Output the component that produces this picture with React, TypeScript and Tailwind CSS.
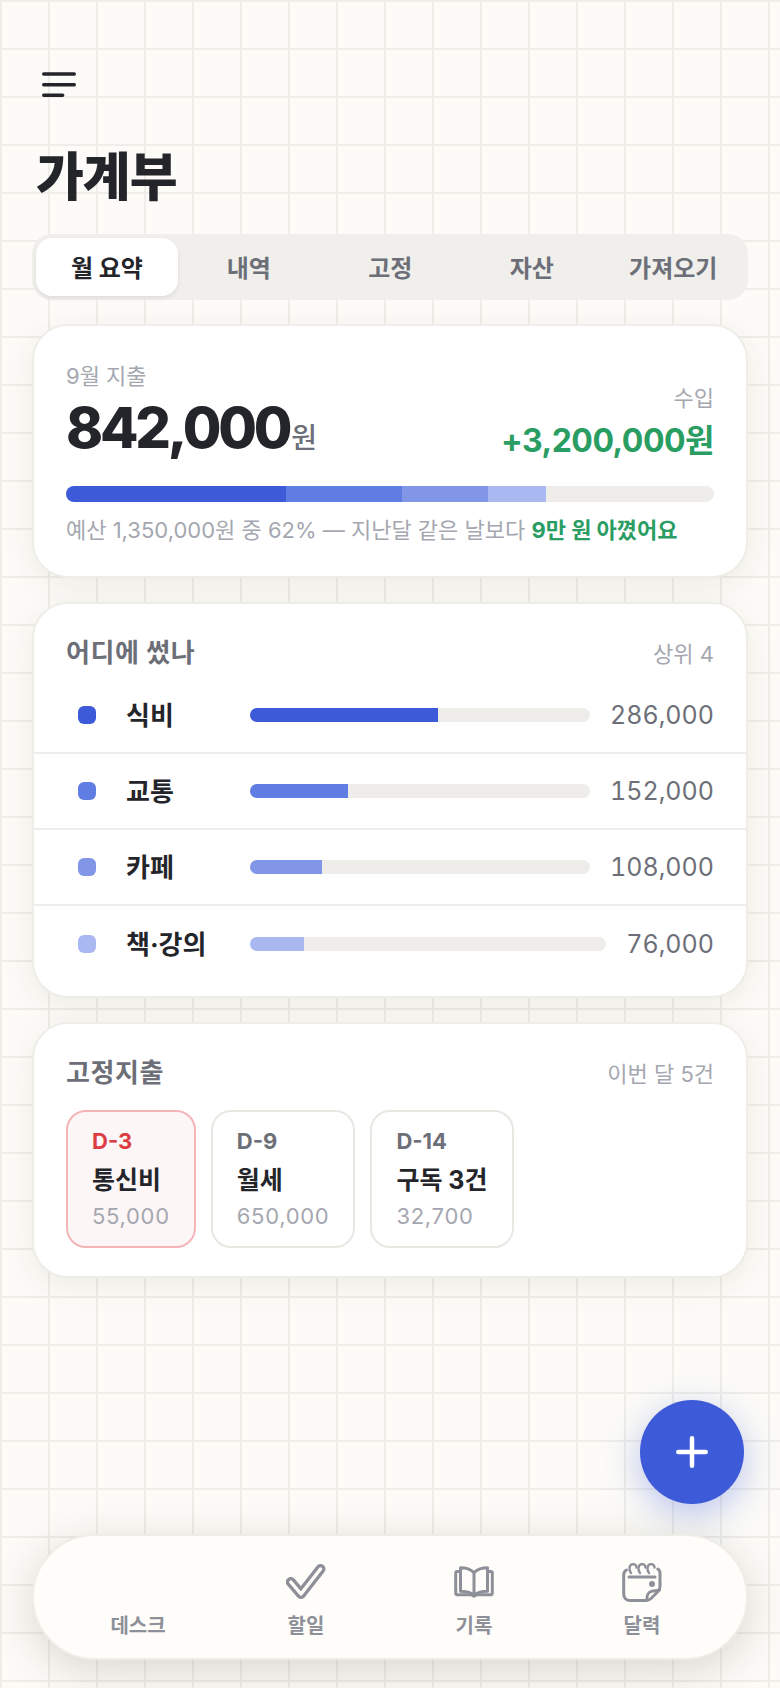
const expenses = [
  { name: '식비', amount: '286,000', color: 'bg-[#3d5bd9]', fill: 'w-[188px]', track: 'w-[340px]' },
  { name: '교통', amount: '152,000', color: 'bg-[#5f7de3]', fill: 'w-[98px]', track: 'w-[340px]' },
  { name: '카페', amount: '108,000', color: 'bg-[#8296e8]', fill: 'w-[72px]', track: 'w-[340px]' },
  { name: '책·강의', amount: '76,000', color: 'bg-[#a9b8f0]', fill: 'w-[54px]', track: 'w-[356px]' },
];

const fixedCosts = [
  { due: 'D-3', name: '통신비', amount: '55,000', urgent: true },
  { due: 'D-9', name: '월세', amount: '650,000', urgent: false },
  { due: 'D-14', name: '구독 3건', amount: '32,700', urgent: false },
];

function MenuIcon() {
  return (
    <svg width="34" height="26" viewBox="0 0 34 26" fill="none" stroke="#24252b" strokeWidth="3.400" strokeLinecap="round">
      <path d="M1.700 2h30.600M1.700 12.700h30.600M1.700 23.300h19" />
    </svg>
  );
}

function CheckIcon() {
  return (
    <svg width="40" height="36" viewBox="0 0 40 36" fill="none" strokeLinecap="round" strokeLinejoin="round">
      <path d="M4.800 18 15 30 34.500 5" stroke="#8e9099" strokeWidth="10" />
      <path d="M4.800 18 15 30 34.500 5" stroke="#fefdf9" strokeWidth="3.400" />
    </svg>
  );
}

function BookIcon() {
  return (
    <svg width="40" height="32" viewBox="0 0 40 32" fill="none" stroke="#8e9099" strokeWidth="3" strokeLinecap="round" strokeLinejoin="round">
      <path d="M20 6.500C16.500 3.200 12 1.700 6.500 1.700v23.600c5.500 0 10 1.200 13.500 3.700 3.500-2.500 8-3.700 13.500-3.700V1.700C28 1.700 23.500 3.200 20 6.500z" />
      <path d="M20 6.500v22.500" />
      <path d="M6.500 5.500H3.200A1.500 1.500 0 0 0 1.700 7v20.300a1.500 1.500 0 0 0 1.500 1.500H16c1.500 0 2.800.5 4 1.500 1.200-1 2.500-1.500 4-1.500h12.800a1.500 1.500 0 0 0 1.500-1.500V7a1.500 1.500 0 0 0-1.500-1.500h-3.300" />
    </svg>
  );
}

function CalendarIcon() {
  return (
    <svg width="40" height="40" viewBox="0 0 40 40" fill="none" stroke="#8e9099" strokeWidth="3" strokeLinecap="round" strokeLinejoin="round">
      <path d="M4.500 8C2.600 9 1.700 10.800 1.700 13V32c0 4 2.500 6.500 6.500 6.500H24c2 0 3.500-.6 5-2l6.500-6.500c1.500-1.500 2.500-3 2.500-5V11c0-1.800-.8-3.200-2.200-4" />
      <path d="M7 15h26" />
      <path d="M25 38c-.6-4.600 1.600-8.200 5.500-8.900 2.500-.4 5-.4 7-1" />
      <g strokeWidth="2.400">
        <path d="M9 11C6.500 8 7 3 10.500 2.200 12.800 1.800 14.500 3.500 14.500 5.500" />
        <path d="M18 11C15.500 8 16 3 19.500 2.200 21.800 1.800 23.500 3.500 23.500 5.500" />
        <path d="M27 11C24.500 8 25 3 28.500 2.200 30.800 1.800 32.500 3.500 32.500 5.500" />
      </g>
      <circle cx="30" cy="22" r="3" fill="#8e9099" stroke="none" />
    </svg>
  );
}

export default function App() {
  return (
    <div className="relative h-[1688px] w-[780px] overflow-hidden bg-[#fcfbf7] bg-[linear-gradient(to_right,#eeede8_2px,transparent_2px),linear-gradient(to_bottom,#eeede8_2px,transparent_2px)] bg-[size:48px_48px] font-['Inter','Noto_Sans_CJK_KR',sans-serif] text-[#24252b]">
      <div className="px-8 pt-[72px]">
        <button className="ml-[10px] block h-[26px] w-[34px]">
          <MenuIcon />
        </button>

        <h1 className="mt-[49px] ml-[4px] text-[52px] leading-[62px] font-extrabold tracking-[-1px]">가계부</h1>

        <div className="mt-[25px] flex h-[66px] rounded-[20px] bg-[#f0efeb] p-[4px]">
          <div className="flex w-[142px] items-center justify-center rounded-[16px] bg-white pt-[4px] text-[24px] font-bold shadow-[0_2px_4px_rgba(0,0,0,0.08)]">월 요약</div>
          {['내역', '고정', '자산', '가져오기'].map((tab) => (
            <div key={tab} className="flex flex-1 items-center justify-center pt-[4px] text-[24px] font-semibold whitespace-nowrap text-[#6d6f78]">
              {tab}
            </div>
          ))}
        </div>

        <section className="mt-[24px] h-[254px] rounded-[36px] border-2 border-[#eeede8] bg-white pt-[36px] pr-[32px] pl-[32px] shadow-[0_8px_32px_rgba(60,50,20,0.08)]">
          <div className="flex items-end justify-between">
            <div>
              <p className="text-[22px] leading-[28px] text-[#a5a7b0]">9월 지출</p>
              <p className="mt-[2px] text-[56px] leading-[72px] font-extrabold tracking-[-3.200px]">
                842,000<span className="ml-[2px] text-[28px] leading-none font-medium tracking-normal text-[#6d6f78]">원</span>
              </p>
            </div>
            <div className="pb-[3px] text-right">
              <p className="text-[22px] leading-[28px] text-[#a5a7b0]">수입</p>
              <p className="mt-[9px] text-[32px] leading-[40px] font-bold tracking-[-0.5px] text-[#2a9d63]">+3,200,000원</p>
            </div>
          </div>
          <div className="mt-[22px] flex h-[16px] overflow-hidden rounded-full bg-[#eeede9]">
            <div className="w-[220px] bg-[#3d5bd9]" />
            <div className="w-[116px] bg-[#5f7de3]" />
            <div className="w-[86px] bg-[#8296e8]" />
            <div className="w-[58px] bg-[#a9b8f0]" />
          </div>
          <p className="mt-[13px] text-[22px] leading-[30px] whitespace-nowrap text-[#a5a7b0]">
            예산 1,350,000원 중 62% — 지난달 같은 날보다 <span className="font-bold text-[#2a9d63]">9만 원 아꼈어요</span>
          </p>
        </section>

        <section className="mt-[24px] h-[396px] rounded-[36px] border-2 border-[#eeede8] bg-white shadow-[0_8px_32px_rgba(60,50,20,0.08)]">
          <div className="flex items-center justify-between pt-[31px] pr-[32px] pl-[32px]">
            <h2 className="text-[26px] leading-[36px] font-bold tracking-[0.6px] text-[#6d6f78]">어디에 썼나</h2>
            <span className="pt-[2px] text-[22px] text-[#a5a7b0]">상위 4</span>
          </div>
          <div className="mt-[7px]">
            {expenses.map((row, i) => (
              <div key={row.name} className={`flex h-[76px] items-center pr-[32px] pl-[44px] ${i < 3 ? 'border-b-2 border-[#eeede9]' : ''}`}>
                <span className={`h-[18px] w-[18px] rounded-[6px] ${row.color}`} />
                <span className="ml-[30px] w-[124px] text-[26px] font-bold">{row.name}</span>
                <div className={`h-[14px] overflow-hidden rounded-full bg-[#eeede9] ${row.track}`}>
                  <div className={`h-full ${row.color} ${row.fill}`} />
                </div>
                <span className="ml-auto pt-[2px] text-[25px] text-[#6d6f78] tabular-nums">{row.amount}</span>
              </div>
            ))}
          </div>
        </section>

        <section className="mt-[24px] h-[256px] rounded-[36px] border-2 border-[#eeede8] bg-white pt-[31px] pr-[32px] pl-[32px] shadow-[0_8px_32px_rgba(60,50,20,0.08)]">
          <div className="flex items-center justify-between">
            <h2 className="text-[26px] leading-[36px] font-bold tracking-[0.6px] text-[#6d6f78]">고정지출</h2>
            <span className="pt-[2px] text-[22px] text-[#a5a7b0]">이번 달 5건</span>
          </div>
          <div className="mt-[19px] flex gap-[15px]">
            {fixedCosts.map((item) => (
              <div key={item.due} className={`h-[138px] rounded-[20px] border-2 px-[24px] pt-[14px] ${item.urgent ? 'border-[#f3b5b8] bg-[#fdf6f6]' : 'border-[#e8e7e2] bg-white'}`}>
                <p className={`text-[22px] leading-[30px] font-bold ${item.urgent ? 'text-[#dc3d43]' : 'text-[#6d6f78]'}`}>{item.due}</p>
                <p className="mt-[4px] text-[25px] leading-[40px] font-bold whitespace-nowrap">{item.name}</p>
                <p className="mt-[1px] text-[22px] leading-[30px] tracking-[0.7px] text-[#a5a7b0]">{item.amount}</p>
              </div>
            ))}
          </div>
        </section>
      </div>

      <button className="absolute top-[1400px] left-[640px] flex h-[104px] w-[104px] items-center justify-center rounded-full bg-[#3d5bd9] shadow-[0_10px_36px_rgba(61,91,217,0.35)]">
        <svg width="32" height="32" viewBox="0 0 32 32" stroke="#ffffff" strokeWidth="4.500" strokeLinecap="round">
          <path d="M16 2.250v27.500M2.250 16h27.500" />
        </svg>
      </button>

      <nav className="absolute top-[1534px] left-[32px] grid h-[126px] w-[716px] grid-cols-4 rounded-full border-2 border-[#eeede8] bg-[#fefdf9] px-[20px] shadow-[0_10px_44px_rgba(40,35,20,0.17)]">
        {[
          { label: '데스크', icon: null },
          { label: '할일', icon: <CheckIcon /> },
          { label: '기록', icon: <BookIcon /> },
          { label: '달력', icon: <CalendarIcon /> },
        ].map((item) => (
          <div key={item.label} className="flex flex-col items-center pt-[24px]">
            <div className="flex h-[44px] items-center justify-center">{item.icon}</div>
            <span className="mt-[8px] text-[20px] leading-[28px] font-bold text-[#8e9099]">{item.label}</span>
          </div>
        ))}
      </nav>
    </div>
  );
}
